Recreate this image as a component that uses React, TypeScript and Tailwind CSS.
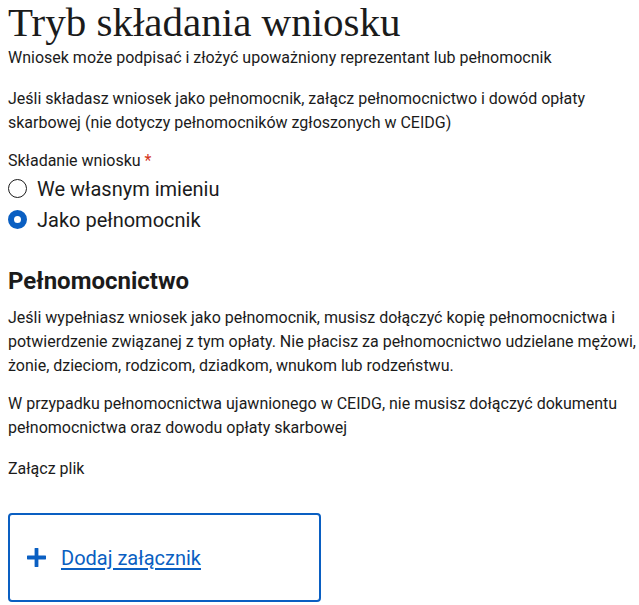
import { useState } from "react";

const options = [
  { id: "own", label: "We własnym imieniu" },
  { id: "proxy", label: "Jako pełnomocnik" },
];

export default function App() {
  const [mode, setMode] = useState("proxy");

  return (
    <div className="min-h-screen bg-white pl-2 text-[#1b1b1b] font-['Roboto',sans-serif]">
      <h1 className="text-[41px] leading-[44px] font-['Liberation_Serif',serif] font-normal">
        Tryb składania wniosku
      </h1>
      <p className="text-base leading-6 mt-[2px]">
        Wniosek może podpisać i złożyć upoważniony reprezentant lub pełnomocnik
      </p>
      <p className="text-base leading-6 mt-[17px]">
        Jeśli składasz wniosek jako pełnomocnik, załącz pełnomocnictwo i dowód opłaty
        skarbowej (nie dotyczy pełnomocników zgłoszonych w CEIDG)
      </p>

      <fieldset className="mt-[14px]">
        <legend className="text-base leading-6">
          Składanie wniosku <span className="text-[#d4351c]">*</span>
        </legend>
        <div className="flex flex-col">
          {options.map((o) => (
            <label key={o.id} className="flex items-center gap-[10px] h-[31px] cursor-pointer">
              <span
                className={
                  mode === o.id
                    ? "w-[19px] h-[19px] rounded-full border-[6px] border-[#0a5fc2] bg-white"
                    : "w-[19px] h-[19px] rounded-full border-[1.5px] border-[#1b1b1b] bg-white"
                }
              />
              <input
                type="radio"
                name="mode"
                className="hidden"
                checked={mode === o.id}
                onChange={() => setMode(o.id)}
              />
              <span className="text-[20px] leading-7">{o.label}</span>
            </label>
          ))}
        </div>
      </fieldset>

      <h2 className="text-[24px] leading-8 font-bold mt-[30px]">Pełnomocnictwo</h2>
      <p className="text-base leading-6 mt-[9px]">
        Jeśli wypełniasz wniosek jako pełnomocnik, musisz dołączyć kopię pełnomocnictwa i
        potwierdzenie związanej z tym opłaty. Nie płacisz za pełnomocnictwo udzielane mężowi,
        żonie, dzieciom, rodzicom, dziadkom, wnukom lub rodzeństwu.
      </p>
      <p className="text-base leading-6 mt-[14px]">
        W przypadku pełnomocnictwa ujawnionego w CEIDG, nie musisz dołączyć dokumentu
        pełnomocnictwa oraz dowodu opłaty skarbowej
      </p>
      <p className="text-base leading-6 mt-[17px]">Załącz plik</p>

      <div className="mt-[32px] w-[313px] h-[89px] border-2 border-[#0a5fc2] rounded-[4px] flex items-center pl-[17px] gap-[15px]">
        <svg width="19" height="19" viewBox="0 0 20 20" className="shrink-0">
          <path d="M10 1v18M1 10h18" stroke="#0a5fc2" strokeWidth="4" strokeLinecap="round" />
        </svg>
        <a href="#" className="text-[20px] text-[#0a5fc2] underline underline-offset-[3px]">
          Dodaj załącznik
        </a>
      </div>
    </div>
  );
}
